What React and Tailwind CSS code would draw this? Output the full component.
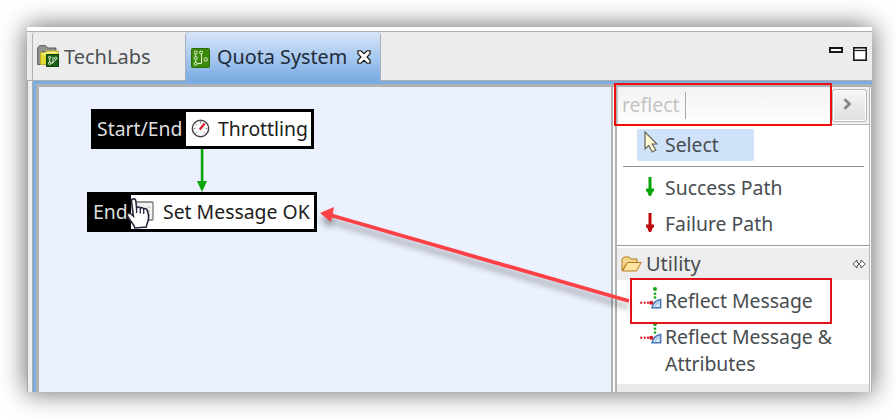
import React from "react";

function FlowIcon({ className }) {
  return (
    <svg className={className} viewBox="0 0 19 20" fill="none">
      <rect x="0.5" y="0.5" width="18" height="19" rx="1" fill="#3c8a0b" stroke="#2b6d08" />
      <g stroke="#e4f3d4" strokeWidth="1">
        <circle cx="4.7" cy="4.5" r="1.5" />
        <circle cx="10" cy="4.5" r="1.5" />
        <circle cx="4.7" cy="10" r="1.5" />
        <circle cx="4.7" cy="15.8" r="1.5" />
        <circle cx="14.7" cy="11.5" r="1.7" />
        <path d="M4.7 6v2.5M4.7 11.5v2.8M10.5 6v9.5H6.5" />
      </g>
    </svg>
  );
}

function ProjectIcon() {
  return (
    <svg className="mb-[2px] h-[22px] w-[22px] shrink-0" viewBox="0 0 22 22" fill="none">
      <path d="M.7 19.5V3L2.5.7h6L10.5 3h8.3V7H5L3.5 19.5Z" fill="#939393" stroke="#555" />
      <path d="M3.5 19.5V7.5h4.5l1.2-1.5h12v13.5Z" fill="#e4dc35" stroke="#b5ab2c" />
      <path d="M5 8.8h4.5L11 7.5h9" stroke="#faf798" strokeWidth="1.6" />
      <rect x="9.5" y="9.5" width="12" height="12" fill="#175f12" stroke="#0c430b" />
      <g stroke="#e8f3e4">
        <circle cx="12.7" cy="12.5" r="1.1" />
        <circle cx="12.7" cy="18.2" r="1.2" />
        <circle cx="18.8" cy="13.3" r="1.2" />
        <path d="M12.7 14v3M16 12v6h-2M18.5 15l-2.5 2.5" />
      </g>
    </svg>
  );
}

function CloseIcon() {
  return (
    <svg className="mb-[2px] ml-[11px] h-[14px] w-[14px] shrink-0" viewBox="0 0 15 15">
      <path d="M1 .8h3.2L7.5 4l3.3-3.2H14V4l-3.2 3.4L14 11v3.2h-3.2L7.5 11l-3.3 3.2H1V11l3.2-3.6L1 4Z" fill="#fffdf5" stroke="#171717" strokeWidth="1.3" />
    </svg>
  );
}

function GaugeIcon() {
  return (
    <svg className="h-[19px] w-[19px] shrink-0" viewBox="0 0 19 19" fill="none">
      <circle cx="9.5" cy="9.5" r="8.2" fill="#fcfcfc" stroke="#45454d" strokeWidth="1.4" />
      <path d="M9.5 2.5v1.7M2.8 9.5h1.5M14.8 9.5h1.5M4.7 4.7l1 1M4.7 14.3l1-1M14.3 14.3l-1-1" stroke="#777" />
      <path d="m8.8 10.5 4.8-6" stroke="#d9202c" strokeWidth="2.2" />
    </svg>
  );
}

function PathArrow({ color }) {
  return (
    <svg className="mb-[4px] h-[19px] w-[10px]" viewBox="0 0 10 19">
      <path d="M3.5 0h3v11.5H9V14l-1.5 1.2-.6 2-1 1.8H4.1l-1-1.8-.6-2L1 14v-2.5h2.5Z" fill={color} />
    </svg>
  );
}

function ReflectIcon() {
  return (
    <svg className="h-[22px] w-[22px]" viewBox="0 0 22 22">
      <g fill="#10a51b">
        <circle cx="15" cy="2" r="2" />
        <rect x="13.8" y="5.6" width="2.4" height="2.2" />
        <rect x="13.8" y="9.4" width="2.4" height="2.2" />
      </g>
      <path d="M12 20.8c1-4.5 3.3-7.5 8.6-8.3v8.3Z" fill="#dceaf8" stroke="#4a76b8" strokeWidth="1.6" />
      <path d="m15 19 4-4.5" stroke="#8db0dc" strokeWidth="1.1" />
      <g fill="#dd1420">
        <rect x="0.2" y="14.7" width="2" height="2" />
        <rect x="3.8" y="14.7" width="2" height="2" />
        <rect x="7" y="14.7" width="2" height="2" />
        <circle cx="11.2" cy="15.7" r="2" />
      </g>
    </svg>
  );
}

function TabBar() {
  return (
    <div className="flex h-[50px] shrink-0 border-y border-[#adadad] bg-[#ececec]">
      <div className="ml-[5px] flex w-[153px] items-center rounded-tl-[4px] border-l border-[#b0b0b0] pt-[2px] pl-[4px]">
        <ProjectIcon />
        <span className="ml-[5px] text-[20px] text-[#4d5154]">TechLabs</span>
      </div>
      <div className="-mb-px flex w-[196px] items-center rounded-t-[4px] border-x border-[#a5b0bd] bg-linear-to-b from-[#d8e6f8] via-[#a9c9ef] to-[#78abe2] pt-[2px] pl-[5px]">
        <FlowIcon className="h-[20px] w-[19px] shrink-0" />
        <span className="mb-[2px] ml-[7px] w-[129px] text-[19.8px] whitespace-nowrap text-[#1d2b39]">Quota System</span>
        <CloseIcon />
      </div>
      <div className="flex flex-1 justify-end gap-[10px] pt-[15px] pr-[5px]">
        <div className="h-[6px] w-[14px] border-2 border-[#171717] bg-white" />
        <svg className="h-[14px] w-[14px]" viewBox="0 0 14 14" fill="none">
          <rect x="0.8" y="0.8" width="12.4" height="12.4" fill="#fff" stroke="#171717" strokeWidth="1.6" />
          <path d="M1.5 3.5h11" stroke="#171717" strokeWidth="1.2" />
        </svg>
      </div>
    </div>
  );
}

function Canvas() {
  return (
    <div className="relative w-[572px] shrink-0 bg-[#ebf1fe] text-[19.4px]">
      <div className="absolute top-[22px] left-[52px] flex h-[40px] w-[223px] items-center border-[3px] border-black bg-white">
        <div className="flex h-full w-[92px] shrink-0 items-center bg-black pl-[3px] text-[#dedede]">
          <span className="whitespace-nowrap">Start/End</span>
        </div>
        <div className="flex items-center pl-[5px]">
          <GaugeIcon />
          <span className="ml-[8px] text-[#202020]">Throttling</span>
        </div>
      </div>
      <svg className="absolute top-[62px] left-[158px] h-[43px] w-[10px]" viewBox="0 0 10 43">
        <path d="M3.8 0h2.6v32H10L5 43 0 32h3.8Z" fill="#08a408" />
      </svg>
      <div className="absolute top-[105px] left-[48px] flex h-[40px] w-[230px] items-center border-[3px] border-black bg-white">
        <div className="flex h-full w-[41px] shrink-0 items-center bg-black pl-[3px] text-[#dedede]">End</div>
        <div className="flex items-center">
          <svg className="mb-[2px] h-[20px] w-[24px]" viewBox="0 0 24 20" fill="none">
            <rect x="4" y="1" width="18" height="18" rx="1" fill="#f3f3f3" stroke="#777" strokeWidth="1.3" />
            <path d="M17 6h2M17 10h2M17 14h2" stroke="#aaa" />
          </svg>
          <span className="ml-[8px] whitespace-nowrap text-[#202020]">Set Message OK</span>
        </div>
      </div>
      <svg className="absolute top-[110px] left-[87px] h-[33px] w-[24px]" viewBox="0 0 24 33">
        <path d="M5.5 4c0-2.8 4-2.8 4.3 0l.8 7c.7-1.6 3.3-1.3 3.7.3 1-1.2 3-.7 3.4.8 1.2-1 3.4-.2 3.6 1.5 1 2.5 1.6 7 .8 10-.5 2.5-1.7 3.6-1.8 6.4L9 31c-.8-3-3.6-5.8-5.7-9-1.8-2.8-3.2-4.5-1-5.6 2-.9 3.8 1.3 5 2.6Z" fill="#fff" stroke="#25283c" strokeWidth="1.6" />
        <path d="M10.6 11v5M14.3 12v4.5M17.7 13v4" stroke="#25283c" strokeWidth="1.3" />
      </svg>
    </div>
  );
}

function Palette() {
  return (
    <div className="flex min-w-0 flex-1 flex-col border-r border-[#b5b5b5] bg-white text-[19.4px] leading-[26.5px] text-[#484d50]">
      <div className="flex h-[38px] shrink-0 border-b border-[#b5b5b5] bg-[#f0f0f0]">
        <div className="flex w-[215px] items-center border-l border-[#c8c8c8] bg-linear-to-b from-[#f2f2f2] to-white pl-[4px]">
          <span className="w-[57px] text-[#c4c4c4]">reflect</span>
          <span className="ml-[6px] h-[27px] w-px bg-[#aaa]" />
        </div>
        <div className="mt-[2px] mr-[2px] flex h-[33px] flex-1 items-center justify-center rounded-[3px] border border-[#b5b5b5] bg-linear-to-b from-[#f7f7f7] to-[#dedede] pr-[4px] inset-ring inset-ring-white">
          <svg className="mb-[4px] h-[12px] w-[9px]" viewBox="0 0 9 12" fill="none">
            <path d="m1.5 1.2 5 4.8-5 4.8" stroke="#858585" strokeWidth="2.8" />
          </svg>
        </div>
      </div>
      <div className="mt-[4px] ml-[20px] flex h-[32px] w-[117px] shrink-0 items-center rounded-[2px] bg-[#cfe2fa]">
        <svg className="mb-[6px] ml-[7px] h-[23px] w-[14px]" viewBox="0 0 14 23">
          <path d="M1 1v17l3.8-3.5 3.5 6.5 3.5-2-3.6-6H13Z" fill="#fffbd8" stroke="#686452" strokeWidth="1.2" />
        </svg>
        <span className="ml-[7px] pt-[1px]">Select</span>
      </div>
      <div className="mt-[5px] mr-[5px] ml-[6px] h-px shrink-0 bg-[#929292]" />
      <div className="mt-[3px] flex h-[36px] shrink-0 items-center pt-[1px] pl-[28px]">
        <PathArrow color="#08a408" />
        <span className="ml-[10px]">Success Path</span>
      </div>
      <div className="flex h-[36px] shrink-0 items-center pt-[1px] pl-[28px]">
        <PathArrow color="#bd080c" />
        <span className="ml-[10px]">Failure Path</span>
      </div>
      <div className="mt-[3px] h-px shrink-0 bg-[#999]" />
      <div className="mt-[2px] flex h-[32px] shrink-0 items-center bg-[#ededed] pl-[4px]">
        <svg className="h-[16px] w-[21px]" viewBox="0 0 21 16">
          <path d="M1 14.5V3l2-2h5l2 2h6v4H6Z" fill="#f5d58c" stroke="#b47a20" />
          <path d="m1.5 15 5-8.5h13.8L15.5 15Z" fill="#ffe3a0" stroke="#b47a20" />
        </svg>
        <span className="ml-[4px] pt-[1px] text-[20px]">Utility</span>
        <svg className="mr-[3px] ml-auto h-[10px] w-[14px]" viewBox="0 0 14 10">
          <path d="M.8 5 5 1v2l2 2 2-2V1l4.2 4L9 9V7L7 5 5 7v2Z" fill="#fff" stroke="#555" />
        </svg>
      </div>
      <div className="flex h-[44px] shrink-0 items-center pb-[2px] pl-[23px]">
        <div className="mb-[6px]"><ReflectIcon /></div>
        <span className="ml-[3px]">Reflect Message</span>
      </div>
      <div className="flex shrink-0 pl-[23px]">
        <div className="-mt-[2px]"><ReflectIcon /></div>
        <span className="ml-[3px] whitespace-nowrap">Reflect Message &amp;<br />Attributes</span>
      </div>
      <div className="mt-auto h-[8px] shrink-0 bg-[#e9e9e9]" />
    </div>
  );
}

function Annotations() {
  return (
    <>
      <div className="absolute top-[83px] left-[614px] h-[43px] w-[218px] border-2 border-[#ed1010]" />
      <div className="absolute top-[278px] left-[630px] h-[46px] w-[202px] border-2 border-[#e21418]" />
      <svg className="absolute top-[203px] left-[310px] h-[115px] w-[325px]" viewBox="0 0 325 115">
        <g className="drop-shadow-[0px_6px_3px_rgba(0,0,0,0.38)]">
          <path d="m20 12 299 86" stroke="#fb4145" strokeWidth="3.8" />
          <path d="m10 10 14-6-1.5 8-1.5 7Z" fill="#fb4145" />
        </g>
      </svg>
    </>
  );
}

export default function App() {
  return (
    <div className="relative h-[418px] w-[895px] overflow-hidden bg-white p-[27px] pr-[23px] pb-[26px] font-['Noto_Sans','Open_Sans',sans-serif]">
      <div className="flex h-[365px] w-[845px] flex-col overflow-hidden bg-white pt-[4px] shadow-[0_0_24px_1px_rgba(0,0,0,0.58)]">
        <TabBar />
        <div className="flex min-h-0 flex-1 border-l border-[#a5a5a5] bg-[#eeeeee] pl-[4px]">
          <div className="flex min-w-0 flex-1 flex-col border-l border-[#aaa] bg-[#7bade5] pt-[3px] pl-[3px]">
            <div className="flex min-h-0 flex-1 border-t-[3px] border-r border-l-[3px] border-[#afb2b4] bg-[#fafafa] pr-px">
              <Canvas />
              <div className="w-[6px] shrink-0 border-r-2 border-l-2 border-[#b2b2b2] bg-white" />
              <Palette />
            </div>
          </div>
        </div>
      </div>
      <Annotations />
    </div>
  );
}
